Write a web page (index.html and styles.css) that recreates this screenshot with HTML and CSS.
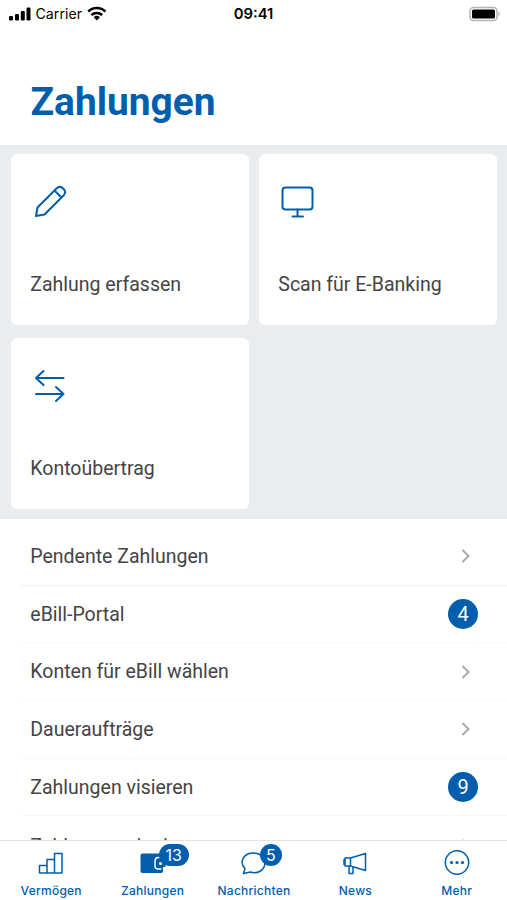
FILE: index.html
```html
<!DOCTYPE html>
<html lang="de">
<head>
<meta charset="utf-8">
<title>Zahlungen</title>
<link rel="stylesheet" href="styles.css">
</head>
<body>
<div class="app">
  <div class="status">
    <div class="carrier">
      <svg width="22" height="14" viewBox="0 0 22 14"><rect x="0" y="9" width="4" height="4.500" rx="1.2"/><rect x="6" y="7" width="4" height="6.500" rx="1.2"/><rect x="11.800" y="4" width="4" height="9.500" rx="1.2"/><rect x="17.500" y="0.500" width="4" height="13" rx="1.2"/></svg>
      <span>Carrier</span>
      <svg class="wifi" width="20" height="15" viewBox="0 0 20 15" fill="none" stroke="#000" stroke-width="2.500"><path d="M1.200 5.500a12.400 12.400 0 0 1 17.200 0M4.400 9a8 8 0 0 1 10.800 0"/><path d="M6.700 11.200a4.700 4.700 0 0 1 6.200 0L9.800 14.400z" fill="#000" stroke="none"/></svg>
    </div>
    <time>09:41</time>
    <svg class="battery" width="32" height="16" viewBox="0 0 32 16"><rect x="1" y="1.500" width="27" height="13" rx="3.500" fill="#fff" stroke="#b5b5b5" stroke-width="1.500"/><rect x="3" y="3.500" width="23" height="9" rx="1.500"/><path d="M29.500 5.500q3 2.500 0 5z" fill="#b5b5b5"/></svg>
  </div>
  <h1>Zahlungen</h1>
  <section class="cards">
    <a class="card">
      <svg width="40" height="40" viewBox="0 0 40 40"><path d="M6 34 7.500 25.500 26.500 6.500Q29.500 3.500 32.500 6L34 7.500Q36.500 10.500 33.500 13.500L14.500 32.500zM24.500 8.500l7 7"/></svg>
      <span>Zahlung erfassen</span>
    </a>
    <a class="card">
      <svg width="40" height="40" viewBox="0 0 40 40"><rect x="4.500" y="5.500" width="30" height="22" rx="3"/><path d="M19.500 27.500v7M14.500 34.500h10.500"/></svg>
      <span>Scan für E-Banking</span>
    </a>
    <a class="card">
      <svg width="40" height="40" viewBox="0 0 40 40"><path d="M33.500 12H6m7.500-7L6 12l7.500 7M6 28h27.500m-7.500-7 7.500 7-7.500 7"/></svg>
      <span>Kontoübertrag</span>
    </a>
  </section>
  <main class="list">
    <a class="row"><span>Pendente Zahlungen</span><svg class="chevron" width="10" height="16" viewBox="0 0 10 16"><path d="m1.500 2 6 6-6 6"/></svg></a>
    <a class="row"><span>eBill-Portal</span><b class="count">4</b></a>
    <a class="row"><span>Konten für eBill wählen</span><svg class="chevron" width="10" height="16" viewBox="0 0 10 16"><path d="m1.500 2 6 6-6 6"/></svg></a>
    <a class="row"><span>Daueraufträge</span><svg class="chevron" width="10" height="16" viewBox="0 0 10 16"><path d="m1.500 2 6 6-6 6"/></svg></a>
    <a class="row"><span>Zahlungen visieren</span><b class="count">9</b></a>
    <a class="row last"><span>Zahlungen signieren</span><svg class="chevron" width="10" height="16" viewBox="0 0 10 16"><path d="m1.500 2 6 6-6 6"/></svg></a>
  </main>
  <nav class="tabs">
    <a class="tab"><span class="icon"><svg width="30" height="28" viewBox="0 0 30 28"><path d="M3.500 24v-7.500h7.500V24zM11 24V10.500h7.500V24zM18.500 24V4.500h7.500V24z"/></svg></span><span>Vermögen</span></a>
    <a class="tab"><span class="icon"><svg width="30" height="28" viewBox="0 0 30 28"><rect x="2.500" y="4.500" width="22.500" height="19.500" rx="2" fill="#005ead" stroke="none"/><path d="M26 8.500h-5.500q-3.500 0-3.500 3.500v5q0 3 3 3h3.500" stroke="#fff"/><path d="M19.500 11h8v7h-8z" fill="#005ead" stroke="none"/><circle cx="22.500" cy="14.500" r="1.500" fill="#fff" stroke="none"/></svg><b class="badge wide">13</b></span><span>Zahlungen</span></a>
    <a class="tab"><span class="icon"><svg width="30" height="28" viewBox="0 0 30 28"><path d="M4.500 24.500 6 19.500C-.5 12.500 5 4 14.500 4c6.500 0 11.500 4 11.500 9.500 0 7.500-7.500 12-14.500 9.500z"/></svg><b class="badge">5</b></span><span>Nachrichten</span></a>
    <a class="tab"><span class="icon"><svg width="30" height="28" viewBox="0 0 30 28"><path d="M5 9h5.500v8H5zM10.500 9l15-4.500v17l-15-4.500zM9 17v7.500h4V18M4 10v6"/></svg></span><span>News</span></a>
    <a class="tab"><span class="icon"><svg width="30" height="28" viewBox="0 0 30 28"><circle cx="15" cy="13.500" r="11.700"/><g fill="#005ead" stroke="none"><circle cx="9.500" cy="13.500" r="1.600"/><circle cx="15" cy="13.500" r="1.600"/><circle cx="20.500" cy="13.500" r="1.600"/></g></svg></span><span>Mehr</span></a>
  </nav>
</div>
</body>
</html>
```
FILE: styles.css
```css
* { box-sizing: border-box; }
body { margin: 0; background: #fff; color: #444; font-family: Roboto, "Liberation Sans", sans-serif; }
.app { height: 900px; display: flex; flex-direction: column; overflow: hidden; }
.status { height: 27px; flex: none; display: grid; grid-template-columns: 1fr auto 1fr; align-items: center; padding: 0 6px 0 9px; color: #000; font: 14.200px Inter, sans-serif; }
.carrier { display: flex; align-items: center; gap: 4.500px; }
.status time { font-weight: 600; font-size: 14.800px; margin-right: 3px; }
.battery { justify-self: end; }
h1 { flex: none; height: 118px; margin: 0; padding: 51px 30.500px 0; line-height: 48px; font-size: 38.900px; font-weight: 700; color: #005ead; }
.cards { flex: none; height: 374px; display: grid; grid-template-columns: 1fr 1fr; grid-template-rows: 171px 171px; gap: 12.500px 10px; padding: 9.300px 10px 0 11px; background: #e9edf0; }
.card { display: flex; flex-direction: column; justify-content: space-between; padding: 28px 19px 27px 19.300px; background: #fff; border-radius: 6px; font-size: 19.500px; line-height: 26px; }
.card svg { margin-left: -.8px; fill: none; stroke: #005ead; stroke-width: 2; stroke-linecap: round; stroke-linejoin: round; }
.list { flex: 1; min-height: 0; overflow: hidden; padding: 9px 0 0 20px; }
.row { height: 57.700px; display: flex; align-items: center; justify-content: space-between; padding: 0 29px 0 10.300px; border-bottom: 1px solid #f9f9f9; font-size: 19.500px; }
.row:first-child { border-color: #f1f1f1; }
.row.last { padding-top: 3px; }
.chevron { margin-right: 7px; fill: none; stroke: #aaa; stroke-width: 2; }
.count { width: 30px; height: 30px; border-radius: 50%; background: #005ead; color: #fff; font-size: 20px; font-weight: 400; line-height: 30px; text-align: center; }
.tabs { height: 60px; flex: none; display: grid; grid-template-columns: repeat(5, 1fr); border-top: 1.500px solid #e3e3e3; background: #fff; }
.tab { display: flex; flex-direction: column; align-items: center; padding: 8px 0 0 1px; color: #005ead; font: 500 12px/16px Inter, sans-serif; letter-spacing: .25px; }
.icon { position: relative; height: 34px; }
.icon svg { fill: none; stroke: #005ead; stroke-width: 1.500; stroke-linejoin: round; }
.badge { position: absolute; top: -5px; left: 21px; width: 22px; height: 22px; border-radius: 11px; background: #005ead; color: #fff; font-weight: 400; font-size: 16px; line-height: 22px; letter-spacing: 0; text-align: center; }
.badge.wide { width: 30px; }
```
